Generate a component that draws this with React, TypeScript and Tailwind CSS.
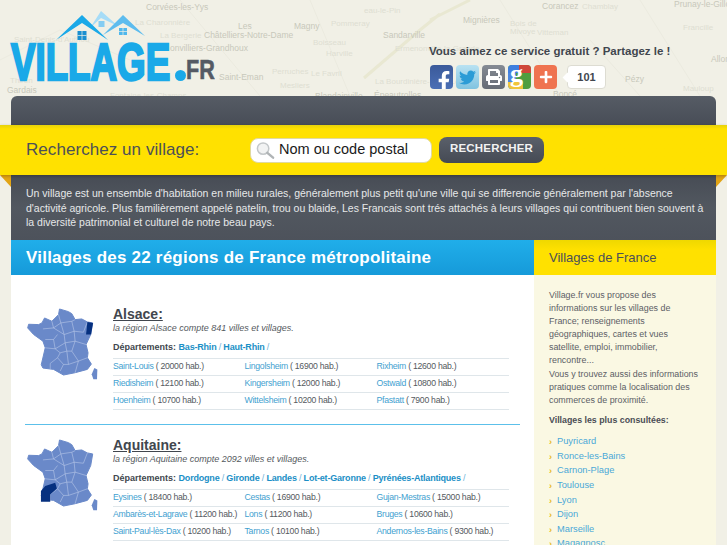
import React from 'react';
import { FaFacebookF, FaTwitter, FaPrint, FaPlus } from 'react-icons/fa';

const MAP_LABELS = [
  { x: 146, y: 2, text: 'Corvées-les-Yys', dark: true },
  { x: 135, y: 18, text: 'La Charonnière', dark: false },
  { x: 160, y: 31, text: 'La Bergerie', dark: false },
  { x: 238, y: 21, text: 'Les', dark: true },
  { x: 204, y: 30, text: 'Châtelliers-Notre-Dame', dark: true },
  { x: 294, y: 21, text: 'Magny', dark: true },
  { x: 331, y: 19, text: 'Pommeray', dark: false },
  { x: 14, y: 35, text: "Saint-Denis-d'Authou", dark: false },
  { x: 170, y: 43, text: 'onvilliers-Grandhoux', dark: true },
  { x: 313, y: 38, text: 'Boisseau', dark: false },
  { x: 326, y: 49, text: 'Harville', dark: false },
  { x: 272, y: 67, text: 'Perruches', dark: false },
  { x: 311, y: 69, text: 'Le Favril', dark: false },
  { x: 219, y: 72, text: 'Saint-Eman', dark: true },
  { x: 10, y: 76, text: 'Thiron', dark: false },
  { x: 7, y: 85, text: 'Gardais', dark: true },
  { x: 280, y: 81, text: 'Mesliers', dark: false },
  { x: 315, y: 91, text: 'Blandainville', dark: true },
  { x: 110, y: 91, text: 'Fontaine-les-Champs', dark: false },
  { x: 364, y: 6, text: 'eau-le-Pin', dark: false },
  { x: 463, y: 15, text: 'Mignières', dark: true },
  { x: 383, y: 30, text: 'Sandarville', dark: true },
  { x: 395, y: 44, text: 'Ermenonville-la-Grande', dark: false },
  { x: 510, y: 19, text: 'Bois de', dark: false },
  { x: 510, y: 27, text: 'Mivoye', dark: false },
  { x: 542, y: 1, text: 'Corancez', dark: true },
  { x: 582, y: 2, text: 'Chamblay', dark: false },
  { x: 537, y: 28, text: 'Vitteman', dark: false },
  { x: 674, y: -1, text: 'Prunay-le-Gillon', dark: true },
  { x: 683, y: 23, text: 'Francille', dark: false },
  { x: 711, y: 54, text: 'Allonnes', dark: true },
  { x: 625, y: 74, text: 'Pézy', dark: true },
  { x: 683, y: 84, text: 'Mauloup', dark: false },
  { x: 375, y: 77, text: 'La Bourdinière-Saint-Loup', dark: false },
  { x: 374, y: 90, text: 'Épeautrolles', dark: true },
  { x: 553, y: 89, text: 'Boncé', dark: true },
];

const REGIONS = [
  {
    name: 'Alsace:',
    info: 'la région Alsace compte 841 villes et villages.',
    departments: ['Bas-Rhin', 'Haut-Rhin'],
    highlight: 'M262 97 L279 100 L273 135 L258 135 Z',
    rows: [
      [['Saint-Louis', '20000'], ['Lingolsheim', '16900'], ['Rixheim', '12600']],
      [['Riedisheim', '12100'], ['Kingersheim', '12000'], ['Ostwald', '10800']],
      [['Hoenheim', '10700'], ['Wittelsheim', '10200'], ['Pfastatt', '7900']],
    ],
  },
  {
    name: 'Aquitaine:',
    info: 'la région Aquitaine compte 2092 villes et villages.',
    departments: ['Dordogne', 'Gironde', 'Landes', 'Lot-et-Garonne', 'Pyrénées-Atlantiques'],
    highlight: 'M122 244 L122 212 L135 197 L165 187 L170 204 L150 222 L150 244 Z',
    rows: [
      [['Eysines', '18400'], ['Cestas', '16900'], ['Gujan-Mestras', '15000']],
      [['Ambarès-et-Lagrave', '11200'], ['Lons', '11200'], ['Bruges', '10600']],
      [['Saint-Paul-lès-Dax', '10200'], ['Tarnos', '10100'], ['Andernos-les-Bains', '9300']],
    ],
  },
];

const TOP_VILLAGES = ['Puyricard', 'Ronce-les-Bains', 'Carnon-Plage', 'Toulouse', 'Lyon', 'Dijon', 'Marseille', 'Magagnosc'];

function FranceMap({ highlight }: { highlight: string }) {
  return (
    <svg viewBox="78 55 218 220" className="w-[73px] h-[73px] shrink-0">
      <path
        d="M178 58 L205 66 L215 72 L225 90 L245 88 L262 97 L278 100 L272 135 L258 165 L264 190 L262 205 L274 224 L262 240 L225 250 L190 257 L160 240 L128 236 L123 226 L135 175 L128 155 L100 135 L82 115 L85 104 L115 105 L125 100 L133 85 L155 95 L175 75 Z"
        fill="#6a89c9"
        stroke="#6a89c9"
        strokeWidth="3"
        strokeLinejoin="round"
      />
      <path d="M283 236 L292 240 L291 270 L280 270 L275 255 Z" fill="#6a89c9" />
      <path
        d="M155 95 L160 115 L128 118 M175 75 L182 100 L160 115 M182 100 L215 95 L225 90 M215 95 L222 125 L250 128 L262 97 M222 125 L192 135 L182 100 M192 135 L160 115 M135 150 L160 150 L172 135 M160 150 L165 178 L135 175 M165 178 L195 160 L192 135 M195 160 L225 155 L222 125 M225 155 L258 165 M195 160 L200 185 L215 185 L225 155 M200 185 L180 190 L165 178 M180 190 L172 205 L150 222 L150 240 M172 205 L190 225 L180 245 M200 185 L205 225 L190 225 M215 185 L235 215 L205 225 M235 215 L262 205 M235 215 L225 250"
        fill="none"
        stroke="#c3d0ec"
        strokeWidth="1.6"
        strokeLinejoin="round"
      />
      <path d={highlight} fill="#06307f" />
    </svg>
  );
}

function RegionBlock({ region, first }: { region: (typeof REGIONS)[number]; first: boolean }) {
  return (
    <section className={first ? 'flex gap-[14px] pl-[15px] pr-[25px] h-[149px] pt-[31px]' : 'flex gap-[14px] pl-[15px] pr-[25px] pt-[12px]'}>
      <div className="pt-[2px]">
        <FranceMap highlight={region.highlight} />
      </div>
      <div className="flex-1">
        <h2 className="text-[14px] leading-[16px] font-bold underline text-[#41464e]">{region.name}</h2>
        <p className="text-[9px] leading-[12px] italic text-[#555a60]">{region.info}</p>
        <p className="mt-[6.5px] text-[9px] leading-[12px] font-bold text-[#41464e] whitespace-nowrap">
          Départements:{' '}
          {region.departments.map((d) => (
            <span key={d} className="tracking-[-0.2px]">
              <span className="text-[#1b8fc6]">{d}</span>
              <span className="font-normal text-[#6fb3d8]"> / </span>
            </span>
          ))}
        </p>
        <div className="mt-[5.5px] border-t border-[#dfe6ea]">
          {region.rows.map((row, i) => (
            <div key={i} className="grid grid-cols-[131.5px_132px_1fr] h-[17px] items-center border-b border-[#dfe6ea] text-[8.7px] tracking-[-0.27px] text-[#555a60]">
              {row.map(([city, pop]) => (
                <span key={city} className="whitespace-nowrap">
                  <span className="text-[#3f9fd0]">{city}</span> ( {pop} hab.)
                </span>
              ))}
            </div>
          ))}
        </div>
      </div>
    </section>
  );
}

export default function App() {
  return (
    <div className="relative h-[545px] w-[727px] overflow-hidden bg-[#f1f0e6] font-['Liberation_Sans',Arial,sans-serif]">
      {/* fond de carte */}
      <div className="absolute inset-0">
        <svg className="absolute inset-0 w-full h-full" viewBox="0 0 727 545" fill="none">
          <path d="M430 20 L470 0 M364 78 L420 30 L440 14" stroke="#e9e8d2" strokeWidth="3" />
          <path d="M500 0 L560 96 M640 0 L700 96 M590 40 L640 96 M180 0 L260 96 M310 0 L350 96 M0 60 L60 30 L130 60" stroke="#ebeadf" strokeWidth="1" />
        </svg>
        {MAP_LABELS.map((l) => (
          <span
            key={l.text}
            style={{ left: l.x, top: l.y }}
            className={l.dark ? 'absolute text-[8.5px] leading-[10px] whitespace-nowrap text-[#c8c8bb]' : 'absolute text-[8px] leading-[10px] whitespace-nowrap text-[#deded2]'}
          >
            {l.text}
          </span>
        ))}
      </div>

      <div className="relative">
        <header className="relative flex h-[96px] justify-between pl-[10px] pr-[56px]">
          {/* logo */}
          <div className="relative w-[210px] h-[96px]">
            <span className="absolute left-[1px] top-[35px] origin-left scale-x-[.72] text-[51px] leading-[56px] font-bold text-[#1aa9e8] [-webkit-text-stroke:2.5px_#1aa9e8]">
              VILLAGE
            </span>
            <svg viewBox="0 0 220 50" className="absolute -left-[10px] top-0 h-[50px] w-[220px]">
              <path d="M90 28 L101 11 L118 26 L101 18 Z" fill="#a6dcf7" />
              <rect x="98.5" y="21" width="6" height="6" fill="#86cdf2" />
              <path d="M103 35 L123 15 L145 36 L123 23 Z" fill="#5dbcee" />
              <rect x="119" y="28" width="8" height="7" fill="#4fb7ec" />
              <path d="M119 31.5 H127 M123 28 V35" stroke="#f1f0e6" strokeWidth=".7" />
              <path d="M56 40 L82 15 L108 40 L82 23 Z" fill="#1aa9e8" />
              <rect x="77.5" y="31" width="9" height="9" fill="#1a8fd0" />
              <path d="M77.5 35.5 H86.5 M82 31 V40" stroke="#f1f0e6" strokeWidth=".7" />
            </svg>
            <span className="absolute left-[165px] top-[70px] h-[11px] w-[11px] rounded-full bg-[#1aa9e8]" />
            <span className="absolute left-[176px] top-[54px] origin-left scale-x-[.8] text-[27px] leading-[32px] font-bold text-[#555a64] [-webkit-text-stroke:.6px_#555a64]">
              FR
            </span>
          </div>

          <div className="w-[242px] pt-[44px]">
            <p className="text-[11.5px] leading-[14px] font-bold text-[#41464e] whitespace-nowrap">Vous aimez ce service gratuit ? Partagez le !</p>
            <div className="mt-[7px] flex items-center gap-[3px] pl-[1px]">
              <span className="flex h-[24px] w-[23px] items-end justify-center overflow-hidden rounded-[4px] bg-gradient-to-b from-[#3b5a9a] to-[#4a6fb5] text-white">
                <FaFacebookF className="h-[20px] w-[20px] translate-x-[2px] translate-y-[2px]" />
              </span>
              <span className="flex h-[24px] w-[23px] items-center justify-center rounded-[4px] bg-gradient-to-b from-[#b9e2f2] to-[#7fc3e0] text-[#2c9cd6]">
                <FaTwitter className="h-[17px] w-[17px]" />
              </span>
              <span className="flex h-[24px] w-[23px] items-center justify-center rounded-[4px] bg-gradient-to-b from-[#858b94] to-[#666c75] text-white">
                <FaPrint className="h-[16px] w-[16px]" />
              </span>
              <span className="relative h-[24px] w-[23px] overflow-hidden rounded-[4px] bg-[#4f9e3f]">
                <span className="absolute left-0 top-0 h-[8px] w-[12px] bg-[#3f7fe0]" />
                <span className="absolute right-0 top-0 h-[8px] w-[12px] bg-[#d0473a]" />
                <span className="absolute left-0 bottom-0 h-[16px] w-[8px] bg-[#4a86e0]" />
                <span className="absolute left-0 bottom-0 h-[7px] w-[15px] bg-[#f0c53a]" />
                <span className="absolute left-[2px] -top-[5px] font-['Liberation_Serif',serif] text-[26px] leading-[28px] font-bold text-white">g</span>
              </span>
              <span className="flex h-[24px] w-[23px] items-center justify-center rounded-[4px] bg-[#ef7350] text-white">
                <FaPlus className="h-[14px] w-[14px]" />
              </span>
              <span className="relative ml-[7px] flex h-[24px] w-[39px] items-center justify-center rounded-[4px] border border-[#dddcd2] bg-white text-[11px] font-bold text-[#41464e]">
                <span className="absolute -left-[4px] top-[8px] h-[7px] w-[7px] rotate-45 bg-white" />
                101
              </span>
            </div>
          </div>
        </header>

        <div className="mx-[11px] h-[29px] rounded-t-[6px] bg-gradient-to-b from-[#565c65] to-[#484d57]" />

        <div className="relative">
          <div className="relative z-10 flex h-[50px] items-center bg-gradient-to-b from-[#e6d20a] to-[#ffe100] to-[8%] pl-[26px] shadow-[0_1px_3px_rgba(0,0,0,.25)]">
            <span className="w-[224px] text-[17px] tracking-[0.06px] text-[#4c5057]">Recherchez un village:</span>
            <div className="flex h-[25px] w-[182px] items-center gap-[4px] rounded-[8px] border border-[#e0d9a0] bg-white pl-[4px]">
              <svg viewBox="0 0 20 20" className="h-[19px] w-[20px] shrink-0" fill="none">
                <circle cx="8" cy="8" r="6" stroke="#c3c7c9" strokeWidth="1.6" fill="#f2f3f3" />
                <path d="M12.5 12.5 L18.5 17.5" stroke="#b0b4b6" strokeWidth="2.6" strokeLinecap="round" />
              </svg>
              <span className="text-[14.5px] text-[#1a1a1a] whitespace-nowrap">Nom ou code postal</span>
            </div>
            <button className="ml-[7px] h-[26px] w-[105px] rounded-[8px] bg-gradient-to-b from-[#5a606a] to-[#454a54] pb-[2px] text-[11.5px] font-bold tracking-[0.2px] text-[#f2f2f2]">
              RECHERCHER
            </button>
          </div>
          {/* plis du ruban */}
          <div className="absolute left-0 top-[50px] h-0 w-0 border-l-[11px] border-b-[12px] border-l-transparent border-b-transparent border-t-[12px] border-t-[#e2a414]" />
          <div className="absolute right-0 top-[50px] h-0 w-0 border-r-[11px] border-b-[12px] border-r-transparent border-b-transparent border-t-[12px] border-t-[#e2a414]" />
        </div>

        <div className="mx-[11px] h-[65px] bg-gradient-to-b from-[#474c55] via-[#525860] to-[#4d525b] px-[15px] pt-[11px] text-[10.5px] leading-[14.6px] text-[#e6e8e9] whitespace-nowrap">
          <p>
            Un village est un ensemble d'habitation en milieu rurales, généralement plus petit qu'une ville qui se differencie généralement par l'absence
            <br />
            d'activité agricole. Plus familièrement appelé patelin, trou ou blaide, Les Francais sont trés attachés à leurs villages qui contribuent bien souvent à
            <br />
            la diversité patrimonial et culturel de notre beau pays.
          </p>
        </div>

        <div className="mx-[11px] grid grid-cols-[523px_182px]">
          <div className="bg-white">
            <h1 className="flex h-[35px] items-center bg-gradient-to-b from-[#20aeea] to-[#169ad9] pl-[15px] text-[17px] font-bold tracking-[0.22px] text-white">
              Villages des 22 régions de France métropolitaine
            </h1>
            {REGIONS.map((region, i) => (
              <div key={region.name}>
                {i > 0 && <div className="mx-[14px] h-[1px] bg-[#5cc0ea]" />}
                <RegionBlock region={region} first={i === 0} />
              </div>
            ))}
          </div>
          <aside className="bg-[#faf8e3]">
            <h3 className="flex h-[35px] items-center bg-gradient-to-b from-[#efd800] to-[#ffe100] to-30% pl-[15px] text-[13px] text-[#4c5057]">
              Villages de France
            </h3>
            <div className="px-[15px] pt-[14px]">
              <p className="text-[8.9px] leading-[13.1px] text-[#5c6066]">
                Village.fr vous propose des
                <br />
                informations sur les villages de
                <br />
                France; renseignements
                <br />
                géographiques, cartes et vues
                <br />
                satellite, emploi, immobilier,
                <br />
                rencontre...
                <br />
                Vous y trouvez aussi des informations
                <br />
                pratiques comme la localisation des
                <br />
                commerces de proximité.
              </p>
              <p className="mt-[7px] text-[8.8px] leading-[13px] font-bold text-[#4a4e55]">Villages les plus consultées:</p>
              <ul className="mt-[8px]">
                {TOP_VILLAGES.map((v) => (
                  <li key={v} className="flex h-[14.6px] items-center gap-[5px] text-[9.3px] text-[#4aa8d8]">
                    <span className="w-[3px] text-[9px] font-bold leading-[10px] text-[#e6b81e]">›</span>
                    {v}
                  </li>
                ))}
              </ul>
            </div>
          </aside>
        </div>
      </div>
    </div>
  );
}
